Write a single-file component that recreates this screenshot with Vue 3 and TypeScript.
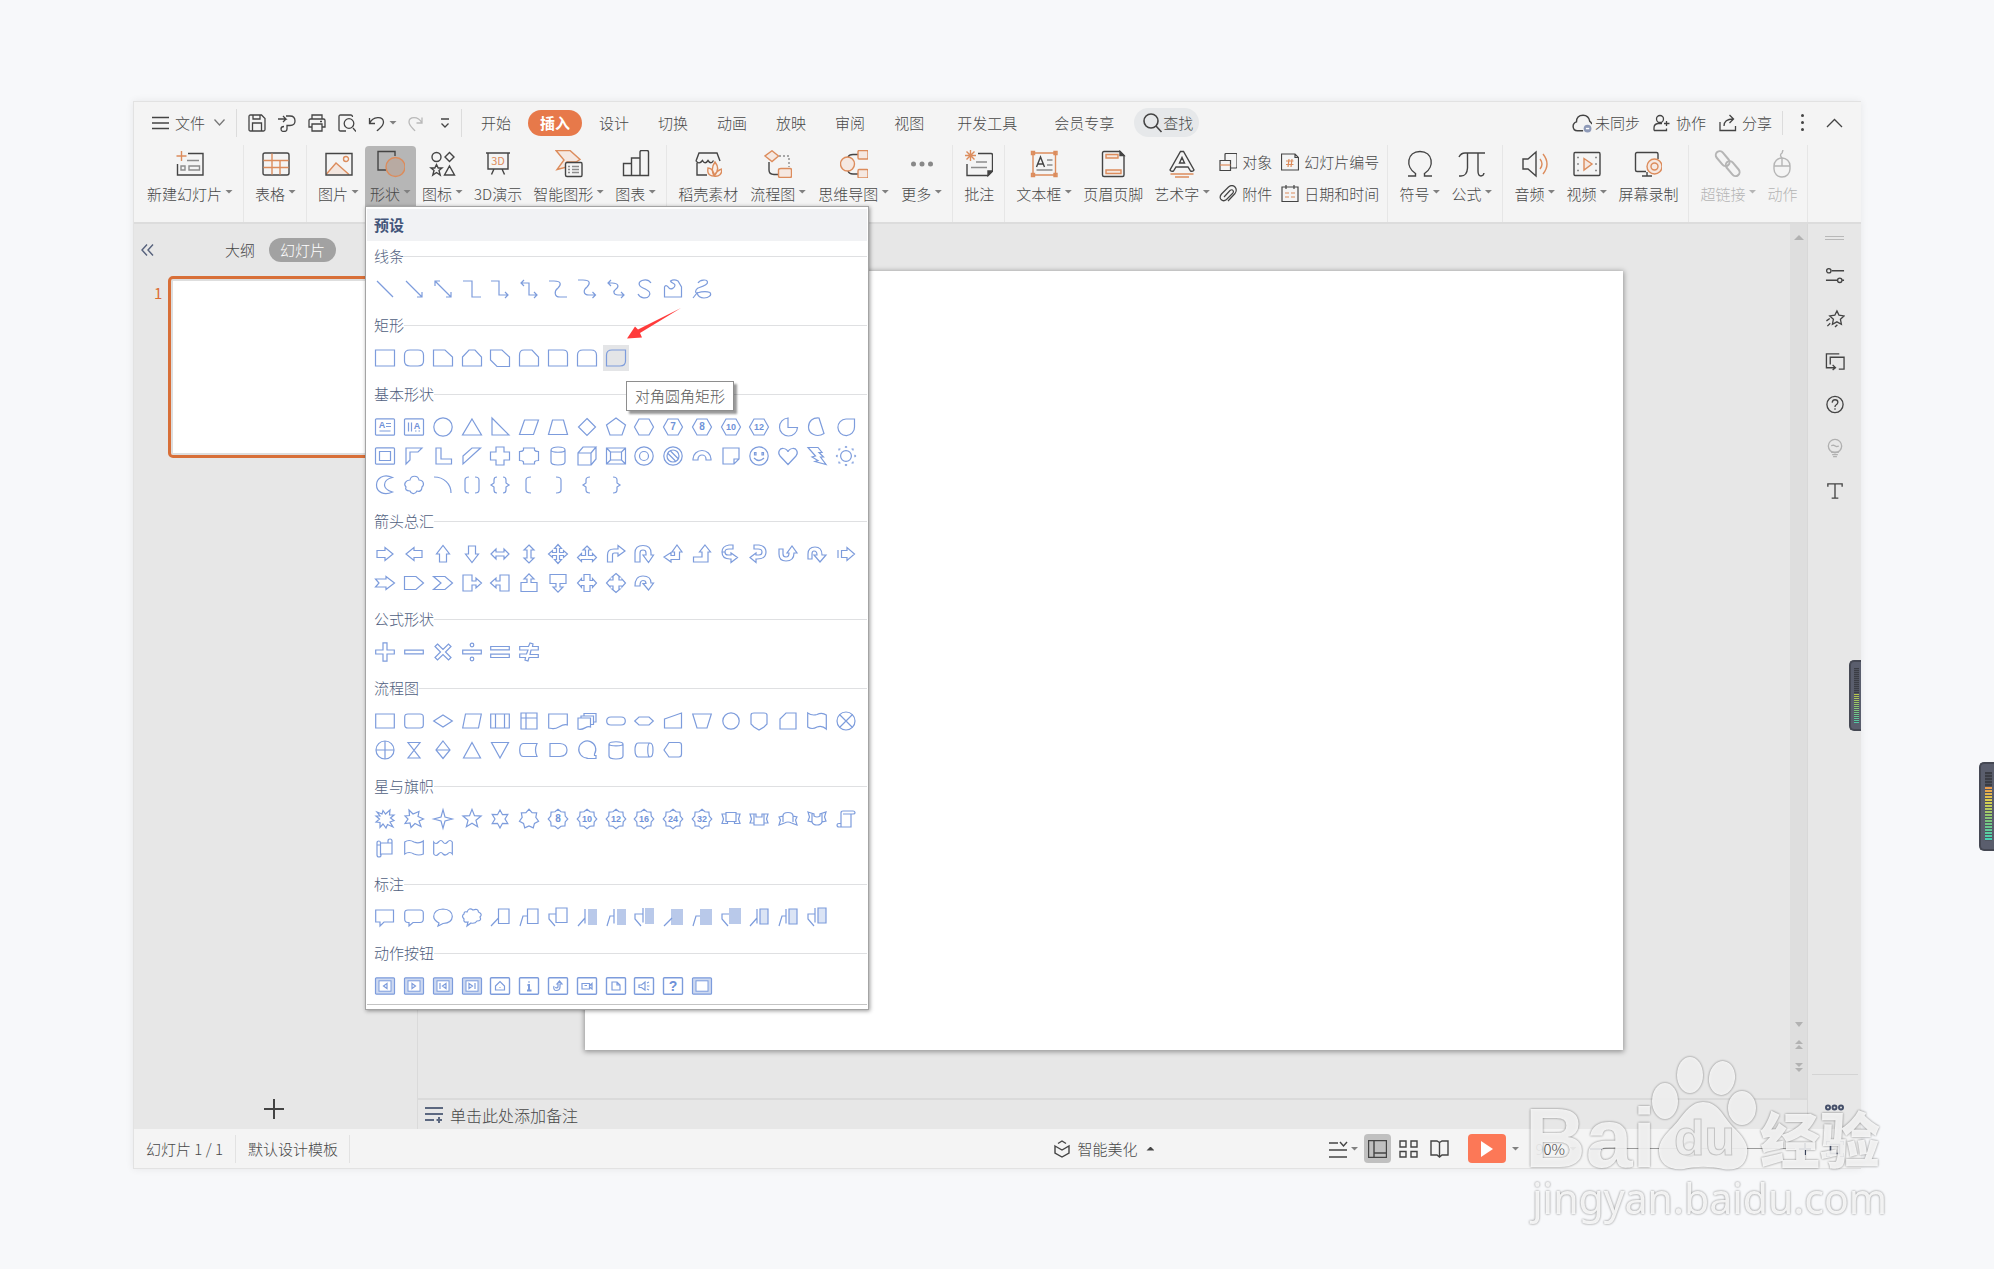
<script setup lang="ts">
import { ref } from 'vue'

interface Tool { label: string; icon: string; caret?: boolean; active?: boolean; disabled?: boolean }
interface ToolGroup { tools: Tool[]; pairs?: { label: string; icon: string }[]; roomy?: boolean }
interface Section { title: string; shapes: string[] }

const p = (d: string, attrs = ''): string => `<path d="${d}" ${attrs}/>`
const o = (d: string, fill = 'none'): string => `<path d="${d}" stroke="#dc8c5c" fill="${fill}"/>`
const g = (d: string): string => `<path d="${d}" stroke="#8c8c8c"/>`
const label = (s: string, x: number, y: number, size: number): string =>
  `<text x="${x}" y="${y}" font-size="${size}" text-anchor="middle" stroke="none" fill="#6f92d8" font-weight="700">${s}</text>`
const circle = (x: number, y: number, r: number): string => `<circle cx="${x}" cy="${y}" r="${r}"/>`
const block = (x: number, y: number, w: number, h: number, fill = '#b9c9ea'): string =>
  `<rect x="${x}" y="${y}" width="${w}" height="${h}" fill="${fill}" stroke="none"/>`

function star(n: number, outer: number, inner: number): string {
  const pts: string[] = []
  for (let i = 0; i < n * 2; i++) {
    const r = i % 2 ? inner : outer
    const a = (Math.PI * i) / n - Math.PI / 2
    pts.push(`${(10 + r * Math.cos(a)).toFixed(2)} ${(10 + r * Math.sin(a)).toFixed(2)}`)
  }
  return p(`M${pts.join('L')}Z`)
}
const hex = 'M5 2H15L19.5 10 15 18H5L.5 10Z'
const hexNum = (s: string): string => p(hex) + label(s, 10, 13.4, s.length > 1 ? 9 : 10)
const badge = (s: string): string => star(8, 9.8, 7.8) + label(s, 10, 13.2, s.length > 1 ? 9 : 10)
const frame = 'M1.5 1.8H18.5Q19.5 1.8 19.5 2.8V17.2Q19.5 18.2 18.5 18.2H1.5Q.5 18.2 .5 17.2V2.8Q.5 1.8 1.5 1.8Z'
const action = (inner: string): string => p(frame, 'stroke-width="1.4"') + inner
const bevelAction = (inner: string): string =>
  p(frame, 'fill="#cdd9f1"') + '<rect x="4" y="4.8" width="12" height="10.4" fill="#fff" stroke-width="1"/>' + inner

const sections: Section[] = [
  {
    title: '线条',
    shapes: [
      p('M2 2L18 18'),
      p('M2 2L18 18M18 13V18H13'),
      p('M2 2L18 18M18 13V18H13M2 7V2H7'),
      p('M1 2H10V18H19'),
      p('M1 2H9V16H18M15 13L18 16 15 19'),
      p('M2 4H10V16H18M5 1L2 4 5 7M15 13L18 16 15 19'),
      p('M1 2H6C14 2 13 6 10 9C6 12 6 18 12 18H19'),
      p('M1 1H6C14 1 13 5 10 8C6 11 6 16 12 16H18.500M15.500 13L18.500 16 15.500 19'),
      p('M2 4H6C13 4 13 8 10 10C7 12 7 16 12 16H18M5 1L2 4 5 7M15 13L18 16 15 19'),
      p('M17 4C15 1 11 .5 8 1.500C4 3 4 7 9 9C16 12 17 14 15 17C13 20 6 19.500 4 15'),
      p('M1.500 18V8C2.500 5.500 4.500 7 6 9C8 11 12 9 12 6C11 4 8 4 7.500 2C10 .5 13 1 15 2L18.500 8V18Z'),
      p('M6 4C8 .5 15 0 15.500 3C16 6 9 8 6 9C3 11 3 14 5 14C10 12.500 14 12 18 13.500C20 16 17 19 12 19C8 19 6 17 5 14L1 19'),
    ],
  },
  {
    title: '矩形',
    shapes: [
      p('M.5 2H19.500V18H.5Z'),
      p('M6 2H14Q19.500 2 19.500 7V13Q19.500 18 14 18H6Q.5 18 .5 13V7Q.5 2 6 2Z'),
      p('M.5 2H12L19.500 9V18H.5Z'),
      p('M.5 9L7 2H13L19.500 9V18H.5Z'),
      p('M.5 2H12L19.500 9V18.500H7L.5 12Z'),
      p('M.5 18V7Q.5 2 5 2H13L19.500 9V18Z'),
      p('M.5 2H15Q19.500 2 19.500 6V18H.5Z'),
      p('M.5 18V7Q.5 2 6 2H14Q19.500 2 19.500 7V18Z'),
      p('M.5 18V7Q.5 2 6 2H19.500V13Q19.500 18 14 18Z'),
    ],
  },
  {
    title: '基本形状',
    shapes: [
      p(frame) + label('A', 7, 11, 9) + p('M11 6.500H16M11 9.500H16M4.500 14H15.500'),
      p(frame) + label('A', 13, 11.5, 9) + p('M4.500 5.500V14.500M7.500 5.500V14.500M11 14H12.500M14.500 14H16'),
      circle(10, 10, 9.2),
      p('M10 2L19.500 18H.5Z'),
      p('M2 1V18H19Z'),
      p('M5.500 3H19.500L14.500 17.500H.5Z'),
      p('M4.500 3H15.500L19.500 17.500H.5Z'),
      p('M10 1.500L18.500 10 10 18.500 1.500 10Z'),
      p('M10 1L19.500 8 16 18H4L.5 8Z'),
      p(hex), hexNum('7'), hexNum('8'), hexNum('10'), hexNum('12'),
      p('M10 1A9 9 0 1 0 19.500 10.500H10Z'),
      p('M12 1L17 16.500C10 21 1.500 17 1.500 10C1.500 4 6 .5 12 1Z'),
      p('M10 2H18.500V10A8.300 8.300 0 1 1 10 2Z'),
      p(frame) + p('M4.500 5.500H15.500V14.500H4.500Z'),
      p('M2 2H18L14 6H6V14L2 18Z'),
      p('M3 2H8V13H18.500V18H3Z'),
      p('M1 10L10 2H18.500L1 18Z'),
      p('M6 1H14V6H19.500V14H14V19H6V14H.5V6H6Z'),
      p('M4.500 2H15.500V4Q16 5.500 19.500 5.500V14.500Q16 14.500 15.500 16V18H4.500V16Q4 14.500 .5 14.500V5.500Q4 5.500 4.500 4Z'),
      p('M3 4C3 0 17 0 17 4V16C17 20 3 20 3 16ZM3 4C3 7 17 7 17 4'),
      p('M1 7H14V19H1ZM1 7L6 1H19L14 7M19 1V13L14 19'),
      p('M.5 2H19.500V18H.5ZM4.500 6H15.500V14H4.500ZM.5 2L4.500 6M19.500 2L15.500 6M.5 18L4.500 14M19.500 18L15.500 14'),
      circle(10, 10, 9.2) + circle(10, 10, 4.5),
      circle(10, 10, 9.2) + circle(10, 10, 6) + p('M5 7.500L12.500 15M7.500 5L15 12.500'),
      p('M1 14V13A9 8.500 0 0 1 19 13V14H14V13A4 4 0 0 0 6 13V14Z'),
      p('M2 2H18V13L13 18H2ZM18 13H13V18'),
      circle(10, 10, 9.2) + p('M5.500 6.500H7V9H5.500ZM13 6.500H14.500V9H13ZM5 12Q10 17 15 12'),
      p('M10 18.500L2 10C-1 6 2 2 5.500 2.500C8 2.500 10 5 10 6C10 5 12 2.500 14.500 2.500C18 2 21 6 18 10Z'),
      p('M1 1.500H11L15 6.500H12L16.500 11H13.500L19 18.500 8 15.500 11 14.500 5 11 8.500 10Z'),
      circle(10, 10, 5.4) + p('M9 1.500L10 .5 11 1.500M9 18.500L10 19.500 11 18.500M1.500 9L.5 10 1.500 11M18.500 9L19.500 10 18.500 11M3 4.500L3 3H4.500M15.500 3H17V4.500M3 15.500V17H4.500M15.500 17H17V15.500'),
      p('M17.500 2.500C8 -2 1.500 4 1.500 10C1.500 17 9 21 17.500 17C11 15 9.500 12 9.500 10C9.500 7 11 4 17.500 2.500Z'),
      p('M6 5C7 0 14 0 15 5C19 5 21 9 18 12C18 16 15 17 13 16C11 20 7 19 6 16C2 16 1 14 2 12C-1 9 2 5 6 5Z'),
      p('M1 2C11 2 18 9 18 18'),
      p('M7 2Q3 2 3 5V15Q3 18 7 18M13 2Q17 2 17 5V15Q17 18 13 18'),
      p('M7 2Q4 2 4 5V8L1 10 4 12V15Q4 18 7 18M13 2Q16 2 16 5V8L19 10 16 12V15Q16 18 13 18'),
      p('M12 2Q7 2 7 5V15Q7 18 12 18'),
      p('M8 2Q13 2 13 5V15Q13 18 8 18'),
      p('M13 2Q9 2 9 5V8L6 10 9 12V15Q9 18 13 18'),
      p('M7 2Q11 2 11 5V8L14 10 11 12V15Q11 18 7 18'),
    ],
  },
  {
    title: '箭头总汇',
    shapes: [
      p('M2 6.500H10V3.500L18 10 10 16.500V13.500H2Z'),
      p('M18 6.500H10V3.500L2 10 10 16.500V13.500H18Z'),
      p('M6.500 18V10H3.500L10 1.500 16.500 10H13.500V18Z'),
      p('M6.500 2V10H3.500L10 18.500 16.500 10H13.500V2Z'),
      p('M1 10L6 5V8H14V5L19 10 14 15V12H6V15Z'),
      p('M10 1L15 6H12V14H15L10 19 5 14H8V6H5Z'),
      p('M10 .5L13.500 4.500H11.500V8.500H15.500V6.500L19.500 10 15.500 13.500V11.500H11.500V15.500H13.500L10 19.500 6.500 15.500H8.500V11.500H4.500V13.500L.5 10 4.500 6.500V8.500H8.500V4.500H6.500Z'),
      p('M10 2L14 6H11.500V11.500H15.500V9.500L19.500 13.500 15.500 17.500V15.500H4.500V17.500L.5 13.500 4.500 9.500V11.500H8.500V6H6Z'),
      p('M1.500 18V11Q1.500 5 8 5H12V1.500L19 7 12 12V9H8.500Q6.500 9 6.500 11V18Z'),
      p('M1 18V9Q1 1.500 9 1.500Q17 1.500 17 9V11H19.500L14.500 18.500 9 11H12V9Q12 6 9 6Q6 6 6 9V18Z'),
      p('M14 1L19 8H16.500V15.500H8V18L1 13 8 8.500V11.500H11.500V8H9Z'),
      p('M13 1L18.500 8H16V18H1.500V13H10V8H7.500Z'),
      p('M12 1H8Q1 2 1 8Q1 15 9 15H10V18.500L16.500 13.500 10 9V11H7Q4 11 4 8Q4 5 8 5H12ZM1 8H4'),
      p('M5 1H10Q17 2 17 8Q17 15 8 15H7V18.500L1 13.500 7 9V11H10Q13 11 13 8Q13 5 9 5H5Z'),
      p('M1 5H5V10Q5 13 8 13Q11 13 11 9H9L14 2 19 9H16Q16 17 8 17Q1 17 1 10Z'),
      p('M1 15V10Q1 3 8 3Q15 3 15 11H19L13 18 7 11H10Q10 7 7 7Q5 7 5 10V15Z'),
      p('M2 6V14M5.500 6.500H11V3.500L18.500 10 11 16.500V13.500H5.500Z'),
      p('M.5 6H11V3.500L19.500 10 11 16.500V14H.5L4 10Z'),
      p('M.5 3.500H12L19.500 10 12 16.500H.5Z'),
      p('M.5 3.500H12L19.500 10 12 16.500H.5L8 10Z'),
      p('M1 2H10V8H14V5L19.500 10 14 15V12H10V18H1Z'),
      p('M19 2H10V8H6V5L.5 10 6 15V12H10V18H19Z'),
      p('M2 18.500V9.500H8V6H5L10 .8 15 6H12V9.500H18V18.500Z'),
      p('M2 1.500V10.500H8V14H5L10 19.200 15 14H12V10.500H18V1.500Z'),
      p('M7 1.500H13V7.500H15.500V5.500L19.500 10 15.500 14.500V12.500H13V18.500H7V12.500H4.500V14.500L.5 10 4.500 5.500V7.500H7Z'),
      p('M10 .5L14 4H13V7H16V6L19.500 10 16 14V13H13V16H14L10 19.500 6 16H7V13H4V14L.5 10 4 6V7H7V4H6Z'),
      p('M1 13Q1 3 9 3Q17 3 17 10H19.500L14.500 17 9 10.500H12Q12 7.500 9 7.500Q6 7.500 6 13Z'),
    ],
  },
  {
    title: '公式形状',
    shapes: [
      p('M8 .8H12V8H19.300V12H12V19.200H8V12H.7V8H8Z'),
      p('M.7 8.200H19.300V11.800H.7Z'),
      p('M4.500 2L10 7.500 15.500 2 18 4.500 12.500 10 18 15.500 15.500 18 10 12.500 4.500 18 2 15.500 7.500 10 2 4.500Z'),
      p('M.7 8.200H19.300V11.800H.7Z') + circle(10, 3, 1.8) + circle(10, 17, 1.8),
      p('M.7 4.500H19.300V7.800H.7ZM.7 12.200H19.300V15.500H.7Z'),
      p('M.7 4.500H9.500L11 1 14 2 13.500 4.500H19.300V8H12L11 12.500H19.300V15.500H10L9 19 6 18 6.500 15.500H.7V12H7.500L9 8H.7Z'),
    ],
  },
  {
    title: '流程图',
    shapes: [
      p('M.7 3H19.300V17H.7Z'),
      p('M4 3H16Q19.300 3 19.300 6V14Q19.300 17 16 17H4Q.7 17 .7 14V6Q.7 3 4 3Z'),
      p('M10 4L19.300 10 10 16 .7 10Z'),
      p('M3.500 3H19.300L16.500 17H.7Z'),
      p('M.7 3H19.300V17H.7ZM5.500 3V17M14.500 3V17'),
      p('M2 2H18V18H2ZM7 2V18M2 7H18'),
      p('M.7 3H19.300V14C13 12 10 19 4 17.500L.7 17Z'),
      p('M4 7V5H7V2.500H19V11H16.500V13.500H13.500M1 7H13.500V16C9 14 7 20 1 18ZM4 5H16.500V13.500'),
      p('M5 6H15Q19.300 6 19.300 10Q19.300 14 15 14H5Q.7 14 .7 10Q.7 6 5 6Z'),
      p('M5 6H15L19.300 10 15 14H5L.7 10Z'),
      p('M1.500 8L18.500 2V17H1.500Z'),
      p('M.7 3H19.300L15 17H5Z'),
      circle(10, 10, 8.2),
      p('M2 4Q2 2 5 2H15Q18 2 18 4V13L15 16 10 19 5 16 2 13Z'),
      p('M8 2H18V18H2V8Z'),
      p('M.7 2Q5 5 10 3.500Q15 1 19.300 4V18Q15 14 10 16Q5 19 .7 16Z'),
      circle(10, 10, 9) + p('M3.500 3.500L16.500 16.500M16.500 3.500L3.500 16.500'),
      circle(10, 10, 9) + p('M10 1V19M1 10H19'),
      p('M4 2.500H16L4 18H16Z'),
      p('M10 1L17 10 10 18.500 3 10ZM3 10H17'),
      p('M10 2.500L18.500 18H1.500Z'),
      p('M1.500 2.500H18.500L10 18Z'),
      p('M4 3.500H18Q15 10 18 16.500H4Q.7 16 .7 10Q.7 4 4 3.500Z'),
      p('M2 3.500H12Q19 4 19 10Q19 16 12 16.500H2Z'),
      p('M10 18A8.500 8.500 0 1 1 17.500 14V15.500H19V18.500H10Z'),
      p('M3 4C3 1 17 1 17 4V16C17 20 3 20 3 16ZM3 4C3 6.500 17 6.500 17 4'),
      p('M4 3H16C20 3 20 17 16 17H4C0 17 0 3 4 3ZM16 3C13 3 13 17 16 17'),
      p('M6 2.500H16Q18.500 2.500 18.500 5V14Q18.500 17 16 17H6L1 10Z'),
    ],
  },
  {
    title: '星与旗帜',
    shapes: [
      p('M2 3L7 5 8 1.500 10.500 5 15 1 14.500 6 19 6 15.500 9 19 11.500 15 13 18 18 12.500 15.500 11 19 8 15 5 18.500 5 13.500 1 13 4.500 10 1 7 5 7Z'),
      p('M5 1L9 5 15 2.500 14 7.500 19.500 10 15 12 17 17.500 11 14.500 7 18.500 6 14 1 14.500 4 10 1 7 5.500 6.500Z'),
      star(4, 9.3, 2.8), star(5, 9.6, 4.2), star(6, 9, 5), star(7, 9.8, 7),
      badge('8'), badge('10'), badge('12'), badge('16'), badge('24'), badge('32'),
      p('M1 5H5V3.500H15V5H19L17.500 10 19 14.500H13.500V12.500H6.500V14.500H1L2.500 10ZM5 5V12.500H6.500M15 5V12.500H13.500'),
      p('M1 5H7V8H13V5H19L17.500 10 19 14H15V16H5V14H1L2.500 10ZM5 5V14M15 5V14'),
      p('M1 8L5 7Q5 3.500 10 3.500Q15 3.500 15 7L19 8 17.500 11 19 16 13.500 14Q10 12 6.500 14L1 16 2.500 11ZM5 7V13M15 7V13'),
      p('M1 3L7 5V7Q10 9 13 7V5L19 3 17.500 8 19 12 15 13Q14 16 10 16Q6 16 5 13L1 12 2.500 8ZM5 5V13M15 5V13'),
      p('M7 2H17Q19 2 19 4 19 5 17 5H15V18H3Q1 18 1 16 1 14.500 3 14.500H5V4Q5 2 7 2ZM5 14.500V18M7 5H17'),
      p('M2 5Q2 3 4 3 5.500 3 5.500 5H13V3Q13 1 15 1 17 1 17 3V16H6V17Q6 19 4 19 2 19 2 17ZM2 7H5.500M13 5H17M5.500 5V17'),
      p('M.7 4Q5 1 10 4Q15 6 19.300 3V16Q15 18 10 16Q5 13 .7 16Z'),
      p('M.7 4Q3 7 5.500 4Q8 1 10 4Q12 7 14.500 4Q17 1 19.300 4V16Q17 13 14.500 16Q12 18 10 16Q8 13 5.500 16Q3 19 .7 16Z'),
    ],
  },
  {
    title: '标注',
    shapes: [
      p('M.7 3H18.500V15H9L5 19V15H.7Z'),
      p('M4 3H16Q19.300 3 19.300 6V12Q19.300 15.500 16 15.500H9L5 19V15.500H4Q.7 15.500 .7 12V6Q.7 3 4 3Z'),
      p('M6 16Q.7 13 .7 9.500Q1 2.500 10 2Q19 2.500 19.300 9.500Q19 16 10 16.500L5 19Z'),
      p('M5 5Q7 0 11 3Q16 1 16.500 5Q21 7 18 10Q20 14 15 14Q13 17 9 16L5 19 6 15Q1 16 2 12Q-1 9 2 7Q2 4 5 5Z'),
      p('M8.500 2H19V16.500H8.500ZM1 19L8.500 11'),
      p('M8.500 2H19V16.500H8.500ZM1 19L4 9H8.500'),
      p('M8 1H19V15.500H8ZM8 7H1V12L7 19'),
      p('M8 2V16.500M1 19L8 11') + block(11, 2, 9, 16),
      p('M8 2V16.500M1 19L4 9H8') + block(11, 2, 9, 16),
      p('M9 1V15.500M9 7H1V12L7 19') + block(11, 1, 9, 16),
      block(8, 2, 12, 16) + p('M1 19L9 11'),
      block(8, 2, 12, 16) + p('M1 19L4 9H8'),
      block(8, 1, 12, 16) + p('M8 7H1V12L7 19'),
      p('M8 2V16.500M1 19L8 11') + block(11, 2, 8, 15, '#dbe4f5') + p('M11 2H19V17H11Z'),
      p('M8 2V16.500M1 19L4 9H8') + block(11, 2, 8, 15, '#dbe4f5') + p('M11 2H19V17H11Z'),
      p('M8 1V15.500M8 7H1V12L7 19') + block(11, 1, 8, 15, '#dbe4f5') + p('M11 1H19V16H11Z'),
    ],
  },
  {
    title: '动作按钮',
    shapes: [
      bevelAction(p('M12 7.500L8.500 10 12 12.500Z')),
      bevelAction(p('M8 7.500L11.500 10 8 12.500Z')),
      bevelAction(p('M13 7.500L9.500 10 13 12.500ZM7 7V13')),
      bevelAction(p('M7 7.500L10.500 10 7 12.500ZM13 7V13')),
      action(p('M5.500 10L10 5.500 14.500 10V14H5.500ZM9.500 11.500H10.500')),
      action(p('M8.500 9H10V14M8 14.500H12.500M10 5.500V6.500', 'stroke-width="2"')),
      action(p('M6 10Q5 14 8 14.500Q12 14.500 12 11V8H14L11.500 5 9 8H10V11Q8 13 7.500 11')),
      action(p('M5 7.500H12.500V13H5ZM12.500 10L15 7.500V13L12.500 11M7.500 9.500H10')),
      action(p('M6 6H11L14 9V14H6ZM11 6V9H14')),
      action(p('M5 9H7.500L11 6V14L7.500 11.500H5ZM13 7L15 6M13 10H15.500M13 13L15 14')),
      action(label('?', 10, 15, 14)),
      bevelAction(''),
    ],
  },
]

const icon: Record<string, string> = {
  newSlide: o('M5.500 1V11M.5 6H10.500') + p('M12 3.500H27V25H1.500V14') + g('M11 10.500H23M5 16H9V20H5ZM13 16H23.500V20H13Z'),
  table: p('M3 3H25Q27 3 27 5V23Q27 25 25 25H3Q1 25 1 23V5Q1 3 3 3Z') + o('M1.500 10.500H26.500M1.500 17.500H26.500M10 3.500V24.500M18 10.500V24.500'),
  picture: o('M1.500 24L11 13 24 24.500', '#f3e6df') + p('M1 3.500H27V25H1Z') + o('M21 6.500a2.500 2.500 0 1 1 0 5 2.500 2.500 0 0 1 0-5Z'),
  shapes: p('M9 20H1V1.500H18V6') + o('M18.500 7.500a9.500 9.500 0 1 1 0 19 9.500 9.500 0 0 1 0-19Z', '#b8aaa2'),
  glyphs: p('M7.500 2.500a4.500 4.500 0 1 1 0 9 4.500 4.500 0 0 1 0-9ZM20.500 2.500L25 7 20.500 11.500 16 7ZM20.500 16L25.500 25H15.500Z') + p('M7.500 14.500L9.200 18H13L10 20.500 11.200 25 7.500 22.500 3.800 25 5 20.500 2 18H5.800Z'),
  stage: p('M2 3H26M4 3V19H24V3M10 19L7.500 24.500M18 19L20.500 24.500') + '<text x="14" y="15" text-anchor="middle" font-size="11" font-weight="400" stroke="none" fill="#dc8c5c">3D</text>',
  smart: o('M1 .5H15L25 9.500 21 12H12V17L2 19.500 9 10Z', '#f5e8e1') + p('M12 12.500H26Q27 12.500 27 14V25Q27 26.500 26 26.500H12Q10.500 26.500 10.500 25V14Q10.500 12.500 12 12.500Z', 'fill="#f4f4f4"') + g('M13 16.500H15M17 16.500H24M13 19.500H15M17 19.500H24M13 22.500H15M17 22.500H24'),
  chart: p('M1.500 13.500H9.500V25.500H1.500ZM9.500 8H18V25.500H9.500ZM18 2Q18 .5 19.500 .5H25Q26.500 .5 26.500 2V25.500H18Z'),
  store: p('M2 11L5 3H23L26 11M2 11Q5 15 8.500 10.500Q11 15 14 10.500Q17 15 19.500 10.500M3 13V25H13') + o('M20 26C12 26 14 19 14 18C18 18 20 22 20 26C17 20 18 16 21 12C25 17 24 22 20 26C22 22 24 20 28 19C28 24 25 27 20 26Z', '#f9efe9'),
  flow: p('M5 12V20Q5 24.500 10 24.500H14') + '<path d="M15 6H25V17" stroke="#8c8c8c" stroke-dasharray="2 2"/>' + o('M8 .8L14.500 6 8 11.500 1 6Z', '#f5e8e1') + o('M17 18.500H26Q27.500 18.500 27.500 20V26Q27.500 27.500 26 27.500H16Q14.500 27.500 14.500 26V20Q14.500 18.500 17 18.500Z', '#f5e8e1'),
  mind: p('M8 7Q9 4.500 13 4.500H18M8 21Q9 24 13 24H18') + o('M7.500 7a7 7 0 1 1 0 14 7 7 0 0 1 0-14Z', '#f5e8e1') + o('M19 .5H27Q28 .5 28 2V7.500Q28 9 27 9H19Q18 9 18 7.500V2Q18 .5 19 .5ZM19 19.500H27Q28 19.500 28 21V26.500Q28 28 27 28H19Q18 28 18 26.500V21Q18 19.500 19 19.500Z', '#f5e8e1'),
  more: '<g fill="#888" stroke="none"><circle cx="5.500" cy="14" r="2.500"/><circle cx="14" cy="14" r="2.500"/><circle cx="22.500" cy="14" r="2.500"/></g>',
  comment: o('M5.500 0V11M0 5.500H11M1.500 1.500L9.500 9.500M9.500 1.500L1.500 9.500') + p('M13 3.500H26Q27.500 3.500 27.500 5V21L23 25.500H2V14') + p('M27.500 21H23V25.500Z', 'fill="#444"') + g('M11 12H22M6 17.500H22'),
  textBox: o('M3 3H25.500V25H3ZM1.500 1.500H4.500V4.500H1.500ZM24 1.500H27V4.500H24ZM1.500 23.500H4.500V26.500H1.500ZM24 23.500H27V26.500H24Z') + p('M6.500 17L10.500 7 14.500 17M8 14H13') + g('M17 10H22.500M17 15H22.500M6.500 20H22.500'),
  header: p('M5 1.500H21L25 5.500V25Q25 26.500 23.500 26.500H5Q3.500 26.500 3.500 25V3Q3.500 1.500 5 1.500Z') + p('M21 1.500V5.500H25Z', 'fill="#444"') + o('M7 4.500H19V8H7ZM7 20H22V23.500H7Z', '#f5e8e1'),
  art: p('M12.500 1.500H15.500L26 20Q25 22 22.500 21L20 17H8L5.500 21Q3 22 2 20ZM11.500 13H16.500L14 7.500Z') + o('M2.500 24H25.500M7 27H21'),
  omega: p('M2 26H9.500V23.500C-1 17 1 1.500 14 1.500C27 1.500 29 17 18.500 23.500V26H26'),
  pi: p('M1 7Q3 3 7 3H27M9.500 3V18Q9 26 3 26H1M20 3V21Q20 26 23 26Q25.500 26 26 23'),
  sound: p('M2 9H7L15 2V26L7 19H2Z') + o('M19 9Q23 14 19 19M22 4Q30 14 22 24'),
  video: p('M2 2.500H26Q27 2.500 27 4V24Q27 25.500 26 25.500H2Q1 25.500 1 24V4Q1 2.500 2 2.500Z') + o('M11 8.500L19 14 11 20Z', '#f5e8e1') + g('M4 7.500H6M4 14H6M4 20.500H6M22 7.500H24M22 14H24M22 20.500H24'),
  record: p('M24 9V4Q24 2.500 22.500 2.500H3Q1.500 2.500 1.500 4V20Q1.500 21.500 3 21.500H12M13 22V26M8 26H18') + o('M20.500 9a7.500 7.500 0 1 1 0 15 7.500 7.500 0 0 1 0-15ZM20.500 13a3.500 3.500 0 1 1 0 7 3.500 3.500 0 0 1 0-7Z', '#f5e8e1'),
  link: '<g stroke="#b5b5b5" stroke-width="2"><rect x="0" y="5" width="17" height="8" rx="4" transform="rotate(50 9 9)"/><rect x="10" y="15" width="17" height="8" rx="4" transform="rotate(50 19 19)"/></g>',
  mouse: '<g stroke="#b5b5b5"><rect x="6" y="8" width="16" height="19" rx="8"/><path d="M6 16H22M14 8V16M14 8Q11 5 14 3L15 0"/></g>',
}
const small: Record<string, string> = {
  object: p('M6 7V1.500Q6 .5 7 .5H17Q18 .5 18 1.500V14Q18 15 17 15H12') + p('M1 7.500H11.500V17.500H1Z') + o('M1 12H11.500'),
  number: p('M2 1H14L17.500 4.500V17H.5V1ZM14 1V4.500H17.500') + o('M5 8H12.500M5 11.500H12.500M8 6L7 14M11 6L10 14'),
  clip: p('M5 12L11 5.500Q13 4 14 5.500Q15 7 13.500 8.500L7.500 14.500Q4.500 17 2 14.500Q0 12 2.500 9L9.500 2Q13-1 16 2Q18.500 5 16 8.500L9 16'),
  date: p('M1 2H17V16.500H1ZM5 0V4M13 0V4') + o('M4 8H8M10 8H14M4 12H8M10 12H14'),
  save: p('M2.500 1H13.500L17 4.500V15.500Q17 17 15.500 17H2.500Q1 17 1 15.500V2.500Q1 1 2.500 1ZM5 1V5H12V1M4.500 17V9H13.500V17'),
  output: p('M0 5H8L5 2M8 5L5 8M8 2H12Q17 2 17 7Q17 11.500 12 11.500H9V15Q9 17.500 6 17.500Q3 17.500 3 15Q3 12.500 6 12.500'),
  print: p('M4 5V1H14V5M3.500 13H1V6.500Q1 5 2.500 5H15.500Q17 5 17 6.500V13H14.500M4 10H14V17H4ZM12 7.500H14'),
  preview: p('M8 17H2.500Q1 17 1 15.500V2.500Q1 1 2.500 1H13Q14.500 1 14.500 3M15 14L18 17.500') + circle(11, 9.5, 4.8),
  undo: p('M1.500 4V9.500H7M1.500 9.500C5 2 15 2 15.500 8C15.500 13 10 15 9 17'),
  redo: '<g stroke="#b9b9b9"><path d="M16 3.500V9H10.500M16 9C12 1.500 3 2.500 3 8C3 12 8 15 9 17"/></g>',
  custom: p('M5 5H13M5.500 9.500L9 13 12.500 9.500'),
  cloud: p('M10 16H5Q1 16 1 12Q1 9 4 8Q4 2 10 2Q15 2 16 7.500Q18 9 17.500 10') + '<circle cx="14" cy="14" r="3.500" fill="#8e9ab8" stroke="none"/><path d="M12.500 14H15.500" stroke="#fff"/>',
  person: p('M1 16.500V14Q1 10 5 9.500H9M1 16.500H13.500V14.500M13.500 7V12M11 9.500H16.500') + circle(7, 5, 3.5),
  share: p('M1 8V16.500H16.500V12M5 12Q5 5 14 5M10.500 1L14.500 5 10.500 9'),
  layout: p('M.5 .5H18.500V17.500H.5ZM6 .5V17.500M6 13H18.500'),
  sorter: p('M1 1H7V7H1ZM12 1H18V7H12ZM1 11.500H7V17H1ZM12 11.500H18V17H12Z'),
  book: p('M1 1H7L9.500 2.500 12 1H18V15H12L9.500 17 7 15H1ZM9.500 2.500V17'),
  notes: p('M0 3H9M0 10H18M0 17H18M11 2L14.500 6 18 2'),
  cube: p('M2 6L9 10 16 6V13L9 17 2 13ZM5 3.500L9 1 13 3.500'),
  memo: '<g stroke="#5c6880" stroke-width="2"><path d="M0 3H18M0 9H18M0 15H9M14 12V18M11.500 15H17"/></g>',
}

const quick = ['save', 'output', 'print', 'preview', 'undo', 'redo', 'custom']
const tabs = ['开始', '插入', '设计', '切换', '动画', '放映', '审阅', '视图', '开发工具', '会员专享']
const activeTab = ref('插入')
const zoomLevel = ref(45)
const openMenu = ref(true)

const groups: ToolGroup[] = [
  { tools: [{ label: '新建幻灯片', icon: 'newSlide', caret: true }] },
  { tools: [{ label: '表格', icon: 'table', caret: true }] },
  {
    tools: [
      { label: '图片', icon: 'picture', caret: true },
      { label: '形状', icon: 'shapes', caret: true, active: true },
      { label: '图标', icon: 'glyphs', caret: true },
      { label: '3D演示', icon: 'stage' },
      { label: '智能图形', icon: 'smart', caret: true },
      { label: '图表', icon: 'chart', caret: true },
    ],
  },
  {
    roomy: true,
    tools: [
      { label: '稻壳素材', icon: 'store' },
      { label: '流程图', icon: 'flow', caret: true },
      { label: '思维导图', icon: 'mind', caret: true },
      { label: '更多', icon: 'more', caret: true },
    ],
  },
  { tools: [{ label: '批注', icon: 'comment' }] },
  {
    tools: [
      { label: '文本框', icon: 'textBox', caret: true },
      { label: '页眉页脚', icon: 'header' },
      { label: '艺术字', icon: 'art', caret: true },
    ],
    pairs: [
      { label: '对象', icon: 'object' },
      { label: '幻灯片编号', icon: 'number' },
      { label: '附件', icon: 'clip' },
      { label: '日期和时间', icon: 'date' },
    ],
  },
  { tools: [{ label: '符号', icon: 'omega', caret: true }, { label: '公式', icon: 'pi', caret: true }] },
  {
    tools: [
      { label: '音频', icon: 'sound', caret: true },
      { label: '视频', icon: 'video', caret: true },
      { label: '屏幕录制', icon: 'record' },
    ],
  },
  {
    tools: [
      { label: '超链接', icon: 'link', caret: true, disabled: true },
      { label: '动作', icon: 'mouse', disabled: true },
    ],
  },
]

const side = [
  { name: '属性', art: p('M6 4H19M0 14H12M17 14H19') + circle(3, 4, 2.3) + circle(14.5, 14, 2.3) },
  { name: '动画', art: p('M11.500 1L13.700 5.500 19 6.300 15.200 9.800 16.200 15 11.500 12.500 6.800 15 7.800 9.800 4 6.300 9.300 5.500ZM4 9L.5 11.500M4.500 14L1.500 17M12 15.500L9.500 18') },
  { name: '切换', art: p('M14 1H.5V15.500H9M7 12.500L10 15.500 7 18M4.500 12V4.500H19V17H13.500') },
  { name: '帮助', art: circle(9.5, 9, 8.5) + p('M6.500 7Q7 4 9.500 4Q12.500 4 12.500 6.500Q12.500 8 10.500 9.500Q9.500 10 9.500 11.500M9.500 13V14.500') },
  { name: '提示', art: '<g stroke="#b0b0b0"><circle cx="9.500" cy="7.500" r="7"/><path d="M5.500 7L8 6.500 11 8 13.500 7.500M5.500 14H13.500M6.500 16.500H12.500M7.500 18.500H11.500"/></g>' },
  { name: '字体', art: p('M2 5V2H17V5M9.500 2V17M6 17H13') },
]
</script>

<template>
  <div class="page">
    <main class="window">
      <header class="menu-row">
        <button class="file"><svg viewBox="0 0 17 14"><path d="M0 1.500H17M0 7H17M0 12.500H17" /></svg>文件<svg class="chev" viewBox="0 0 11 7"><path d="M.5 .5L5.500 6 10.500 .5" /></svg></button>
        <div class="quick">
          <template v-for="q in quick" :key="q">
            <button :aria-label="q"><svg viewBox="0 0 18 18" v-html="small[q]"></svg></button>
            <i v-if="q === 'undo'" class="caret"></i>
          </template>
        </div>
        <nav class="tabs">
          <button v-for="t in tabs" :key="t" :class="{ active: t === activeTab, long: t.length > 2 }" @click="activeTab = t">{{ t }}</button>
        </nav>
        <button class="search"><svg viewBox="0 0 20 20"><circle cx="8" cy="8" r="7" /><path d="M13 13L18.500 19" /></svg>查找</button>
        <div class="account">
          <button><svg class="wide" viewBox="0 0 18 18" v-html="small.cloud"></svg>未同步</button>
          <button><svg viewBox="0 0 18 18" v-html="small.person"></svg>协作</button>
          <button><svg viewBox="0 0 18 18" v-html="small.share"></svg>分享</button>
          <span class="bar"></span>
          <button class="dots" aria-label="更多选项"><i></i><i></i><i></i></button>
          <button aria-label="收起功能区"><svg class="fold" viewBox="0 0 17 10"><path d="M1 9L8.500 1.500 16 9" /></svg></button>
        </div>
      </header>

      <div class="ribbon">
        <div v-for="(grp, i) in groups" :key="i" class="group" :class="{ roomy: grp.roomy }">
          <div v-for="t in grp.tools" :key="t.label" class="slot">
            <button class="tool" :class="{ active: t.active }" :disabled="t.disabled" @click="t.active && (openMenu = !openMenu)">
              <svg viewBox="0 0 28 28" v-html="icon[t.icon]"></svg>
              <span>{{ t.label }}<i v-if="t.caret" class="caret"></i></span>
            </button>

            <section v-if="t.active && openMenu" class="gallery">
              <h2>预设</h2>
              <div class="sections">
                <div v-for="s in sections" :key="s.title" class="section">
                  <h3>{{ s.title }}</h3>
                  <div class="grid">
                    <button v-for="(shape, n) in s.shapes" :key="n" :aria-label="s.title + (n + 1)" :class="{ hover: s.title === '矩形' && n === 8 }">
                      <svg viewBox="0 0 20 20" v-html="shape"></svg>
                    </button>
                  </div>
                </div>
              </div>
              <div class="tip" role="tooltip">对角圆角矩形</div>
              <svg class="pointer" viewBox="0 0 54 32"><path d="M0 30.500L8 18.500 11 21.500 54 0 13 25 15 29.500Z" /></svg>
            </section>
          </div>
          <div v-if="grp.pairs" class="pairs">
            <button v-for="x in grp.pairs" :key="x.label"><svg viewBox="0 0 18 18" v-html="small[x.icon]"></svg>{{ x.label }}</button>
          </div>
        </div>
      </div>

      <div class="work">
        <aside class="slides">
          <div class="slides-head">
            <button class="collapse" aria-label="收起"><svg viewBox="0 0 13 12"><path d="M6 .5L1 6 6 11.500M12 .5L7 6 12 11.500" /></svg></button>
            <button class="outline">大纲</button>
            <button class="pill">幻灯片</button>
          </div>
          <div class="thumb-row"><span>1</span><div class="thumb"></div></div>
          <button class="add" aria-label="新建"><svg viewBox="0 0 20 20"><path d="M10 0V20M0 10H20" /></svg></button>
        </aside>
        <div class="center">
          <div class="stage">
            <div class="canvas"><div class="slide"></div></div>
            <div class="scroll">
              <svg viewBox="0 0 10 5"><path d="M0 5L5 0 10 5Z" /></svg>
              <div class="scroll-end">
                <svg viewBox="0 0 8 5"><path d="M0 0L4 5 8 0Z" /></svg>
                <svg viewBox="0 0 8 10"><path d="M0 4L4 0 8 4ZM0 9L4 5 8 9Z" /></svg>
                <svg viewBox="0 0 8 10"><path d="M0 0L4 4 8 0ZM0 5L4 9 8 5Z" /></svg>
              </div>
            </div>
          </div>
          <div class="notes"><svg viewBox="0 0 19 19" v-html="small.memo"></svg>单击此处添加备注</div>
        </div>
        <aside class="side">
          <span class="grip"></span>
          <button v-for="s in side" :key="s.name" :aria-label="s.name"><svg viewBox="-1 -1 21 21" v-html="s.art"></svg></button>
          <div class="side-end"><svg viewBox="0 0 19 7"><circle cx="3" cy="3.500" r="2" /><circle cx="9.500" cy="3.500" r="2" /><circle cx="16" cy="3.500" r="2" /></svg></div>
        </aside>
      </div>

      <footer class="status">
        <span class="cell">幻灯片 1 / 1</span>
        <span class="cell">默认设计模板</span>
        <button class="beautify"><svg viewBox="0 0 18 18" v-html="small.cube"></svg>智能美化<i class="caret up"></i></button>
        <div class="views">
          <button class="note-toggle" aria-label="备注"><svg viewBox="0 0 19 18" v-html="small.notes"></svg><i class="caret"></i></button>
          <button class="view active" aria-label="普通视图"><svg viewBox="0 0 19 18" v-html="small.layout"></svg></button>
          <button class="view" aria-label="幻灯片浏览"><svg viewBox="0 0 19 18" v-html="small.sorter"></svg></button>
          <button class="view" aria-label="阅读视图"><svg viewBox="0 0 19 18" v-html="small.book"></svg></button>
          <button class="play" aria-label="放映"><svg viewBox="0 0 12 16"><path d="M0 0L12 8 0 16Z" /></svg></button>
          <i class="caret"></i>
          <span class="percent">90%</span><i class="caret"></i>
          <button class="step" aria-label="缩小"><svg viewBox="0 0 12 12"><path d="M0 6H12" /></svg></button>
          <input v-model="zoomLevel" type="range" min="0" max="100" aria-label="缩放">
          <button class="step" aria-label="放大"><svg viewBox="0 0 12 12"><path d="M0 6H12M6 0V12" /></svg></button>
          <button class="fit" aria-label="适应窗口"><svg viewBox="0 0 18 16"><path d="M0 4V0H4M14 0H18V4M18 12V16H14M4 16H0V12M4.500 3.500H13.500V12.500H4.500Z" /></svg></button>
        </div>
      </footer>
      <div class="meter inner"><i></i></div>
    </main>
    <div class="meter outer"><i></i></div>

    <svg class="mark" viewBox="0 0 364 180">
      <g class="brand">
        <text x="-3" y="113" class="latin">Bai</text>
        <ellipse cx="137" cy="47" rx="13" ry="18" />
        <ellipse cx="162" cy="21" rx="13" ry="18" />
        <ellipse cx="194" cy="24" rx="13" ry="17" transform="rotate(8 194 24)" />
        <ellipse cx="214" cy="54" rx="14" ry="17" />
        <path d="M175 48C190 48 194 61 205 73C214 82 221 90 219 100C217 114 206 117 195 115C182 112 168 112 156 115C142 117 131 110 131 97C131 84 143 76 150 67C158 57 164 48 175 48Z" />
        <text x="146" y="101" class="du">du</text>
        <text x="232" y="109" class="han">经验</text>
        <text x="4" y="160" class="url">jingyan.baidu.com</text>
      </g>
    </svg>
  </div>
</template>

<style>
body { margin: 0; background: #f7f8fa; }
</style>

<style scoped>
* { box-sizing: border-box; }
.page {
  position: relative; display: flex; flex-direction: column; min-height: 100vh; padding: 101px 133px 100px; overflow: hidden;
  background: #f7f8fa; color: #484848;
  font: 300 15px/20px "Noto Sans CJK SC", "Noto Sans", sans-serif;
}
button { padding: 0; border: 0; background: none; color: inherit; font: inherit; white-space: nowrap; }
svg { display: block; flex: none; fill: none; stroke: #444; stroke-width: 1.4; }
.caret { display: inline-block; flex: none; width: 8px; height: 4px; background: #808080; clip-path: polygon(0 0, 100% 0, 50% 100%); }
.caret.up { background: #444; clip-path: polygon(0 100%, 100% 100%, 50% 0); }

.window {
  position: relative; flex: 1; display: flex; flex-direction: column; background: #e7e7e7;
  border: 1px solid #e2e2e2; border-right: 0; box-shadow: 0 0 8px rgba(0, 0, 0, .07);
}

.menu-row { display: flex; align-items: center; height: 43px; padding: 0 18px 2px; background: #f4f4f4; }
.menu-row svg { stroke-width: 1.3; }
.file { display: flex; align-items: center; gap: 6px; padding-right: 11px; border-right: 1px solid #dcdcdc; height: 28px; }
.file svg { width: 17px; height: 14px; }
.file .chev { width: 11px; height: 7px; margin-left: 3px; stroke: #777; }
.quick { display: flex; align-items: center; gap: 12px; height: 28px; padding: 0 7px 0 11px; border-right: 1px solid #dcdcdc; }
.quick svg { width: 18px; height: 18px; }
.quick .caret { margin: 0 -3px 0 -9px; }
.tabs { display: flex; gap: 5px; padding: 0 4px 0 7px; }
.tabs button { height: 26px; padding: 0 12px; border-radius: 13px; }
.tabs .long { padding: 0 16px; }
.tabs .active { background: #e7794a; color: #fff; font-weight: 700; }
.search { display: flex; align-items: center; height: 29px; padding: 0 6px 0 9px; border-radius: 15px; background: #e6e8ea; }
.search svg { width: 20px; height: 20px; stroke-width: 1.6; }
.account { display: flex; align-items: center; margin-left: auto; gap: 13px; }
.account button { display: flex; align-items: center; gap: 5px; }
.account svg { width: 18px; height: 18px; }
.account .wide { width: 20px; height: 20px; margin-right: -2px; }
.account .fold { width: 17px; height: 10px; }
.account .bar { width: 1px; height: 24px; margin: 0 5px 0 -3px; background: #dcdcdc; }
.account .dots { flex-direction: column; gap: 4px; margin-right: 9px; }
.dots i { width: 3px; height: 3px; border-radius: 2px; background: #444; }

.ribbon { position: relative; z-index: 2; display: flex; height: 79px; padding-left: 2px; background: #f4f4f4; border-bottom: 2px solid #dcdcdc; }
.group { display: flex; align-items: flex-start; gap: 1px; height: 77px; padding: 1px 5px 0 6px; border-right: 1px solid #e6e6e6; }
.group.roomy { gap: 2px; }
.slot { position: relative; }
.tool { display: flex; flex-direction: column; align-items: center; gap: 6px; height: 60px; padding: 4px 5px 2px; border-radius: 4px 4px 0 0; }
.tool svg { width: 28px; height: 28px; }
.tool span { display: flex; align-items: center; gap: 3px; }
.tool .caret { margin-bottom: 5px; }
.tool.active { background: #b6b6b6; }
.tool:disabled { color: #b5b5b5; }
.tool:disabled .caret { background: #b5b5b5; }
.pairs { display: grid; grid-template-columns: auto auto; grid-auto-rows: 20px; gap: 12px 9px; padding: 6px 3px 0 3px; }
.pairs button { display: flex; align-items: center; gap: 5px; }
.pairs svg { width: 18px; height: 18px; stroke-width: 1.2; }

.gallery {
  position: absolute; top: 100%; left: 0; width: 504px; padding: 2px 1px 4px; background: #fff;
  border: 1px solid #a4a4a4; box-shadow: 1px 1px 4px rgba(0, 0, 0, .4); color: #50607e;
}
.gallery h2 { margin: 0 0 5px; padding: 6px 7px; background: #f1f2f4; color: #43557a; font-size: 15px; line-height: 20px; font-weight: 700; }
.section + .section { margin-top: 12px; }
.section h3 { display: flex; align-items: center; margin: 0 0 8px; padding-left: 7px; font-size: 15px; line-height: 20px; font-weight: 300; }
.section h3::after { content: ""; flex: 1; height: 1px; background: #dfe0e2; }
.grid { display: grid; grid-template-columns: repeat(17, 1fr); grid-auto-rows: 29px; padding: 0 7px 0 4px; }
.grid button { display: flex; align-items: center; justify-content: center; }
.grid svg { width: 20px; height: 20px; stroke: #7d9cdc; stroke-width: 1.2; overflow: visible; font-family: "Liberation Sans", sans-serif; }
.grid .hover { width: 26px; height: 26px; place-self: center; background: #e4e5e7; }
.gallery::after { content: ""; display: block; height: 1px; margin-top: 4px; background: #c4c4c4; }
.tip {
  position: absolute; left: 260px; top: 174px; padding: 4px 8px; background: #fff; border: 1px solid #8e8e8e;
  box-shadow: 3px 3px 2px rgba(0, 0, 0, .4); color: #5a5a5a;
}
.pointer { position: absolute; left: 261px; top: 101px; width: 54px; height: 32px; fill: #ff3b3b; stroke: none; }

.work { flex: 1; display: flex; min-height: 0; }
.slides { display: flex; flex-direction: column; width: 284px; border-right: 1px solid #dadada; }
.slides-head { display: flex; align-items: center; height: 24px; margin-top: 14px; padding-left: 7px; }
.collapse svg { width: 13px; height: 12px; stroke: #56617c; }
.outline { margin-left: 71px; }
.pill { height: 24px; margin-left: 14px; padding: 0 11px; border-radius: 12px; background: #a2a2a2; color: #fff; }
.thumb-row { display: flex; margin-top: 14px; padding-left: 20px; color: #dc6e34; }
.thumb-row span { width: 14px; margin-top: 7px; font-weight: 400; }
.thumb { width: 242px; aspect-ratio: 4 / 3; border: 3px solid #d86f38; border-radius: 5px; background: #fff; box-shadow: inset 0 0 0 2px #dedede; }
.add { align-self: center; margin-top: auto; padding: 0 3px 10px 0; }
.add svg { width: 20px; height: 20px; stroke-width: 2; }
.center { flex: 1; display: flex; flex-direction: column; min-width: 0; }
.stage { flex: 1; display: flex; min-height: 0; }
.canvas { flex: 1; display: flex; justify-content: center; padding: 47px 0 48px; }
.slide { aspect-ratio: 4 / 3; background: #fff; box-shadow: 0 1px 5px 1px rgba(0, 0, 0, .35); }
.scroll { display: flex; flex-direction: column; align-items: center; justify-content: space-between; width: 17px; padding: 11px 0 25px; background: #dedede; }
.scroll svg { width: 10px; height: 5px; fill: #b2b2b2; stroke: none; }
.scroll-end { display: flex; flex-direction: column; align-items: center; gap: 13px; }
.scroll-end svg { width: 8px; height: 5px; }
.scroll-end svg + svg { height: 10px; }
.notes { display: flex; align-items: center; gap: 6px; height: 31px; padding-left: 7px; border-top: 2px solid #dadada; font-size: 16px; }
.notes svg { width: 19px; height: 19px; }
.side { display: flex; flex-direction: column; align-items: center; width: 54px; border-left: 1px solid #d8d8d8; }
.grip { width: 19px; height: 4px; margin: 12px 0 14px; border: solid #b8b8b8; border-width: 1px 0; }
.side button { display: flex; align-items: center; height: 43px; }
.side button svg { width: 20px; height: 20px; }
.side-end { display: flex; justify-content: center; width: 46px; height: 55px; margin-top: auto; padding-top: 29px; border-top: 1px solid #d4d4d4; }
.side-end svg { width: 19px; height: 7px; stroke: #46506a; stroke-width: 2; }

.status { display: flex; align-items: center; height: 39px; padding: 0 17px 0 0; background: #f4f4f4; }
.cell { height: 28px; padding: 4px 12px; border-right: 1px solid #e2e2e2; }
.cell + .cell { padding-right: 11px; }
.beautify { display: flex; align-items: center; gap: 6px; margin-left: auto; }
.beautify svg { width: 18px; height: 18px; }
.beautify .caret { margin-left: 3px; }
.views { display: flex; align-items: center; margin-left: 175px; }
.views svg { width: 19px; height: 18px; }
.note-toggle { display: flex; align-items: center; gap: 2px; margin-right: 6px; }
.view { display: flex; align-items: center; justify-content: center; width: 27px; height: 29px; border-radius: 4px; margin-right: 4px; }
.view.active { background: #c0c0c0; }
.play { display: flex; align-items: center; justify-content: center; width: 38px; height: 29px; margin: 0 5px 0 11px; border-radius: 4px; background: #fc7857; }
.play svg { width: 12px; height: 16px; fill: #fff; stroke: none; }
.percent { margin: 0 4px 0 16px; }
.step { margin-left: 13px; }
.step svg { width: 12px; height: 12px; stroke: #47516b; stroke-width: 2; }
.views input { width: 193px; height: 16px; margin: 0 -9px 0 0; appearance: none; background: linear-gradient(#9a9a9a, #9a9a9a) center / 100% 1px no-repeat; }
.views input::-webkit-slider-thumb { appearance: none; width: 16px; height: 16px; border: 2px solid #555; border-radius: 50%; background: #f6f6f6; }
.fit { margin-left: 15px; }
.fit svg { width: 18px; height: 16px; stroke: #47516b; stroke-width: 1.6; }

.meter { position: absolute; right: 0; border: 2px solid #454853; border-right: 0; border-radius: 5px 0 0 5px; background: #5a5e6d; }
.meter i { display: block; height: 100%; }
.inner { top: 558px; width: 12px; height: 71px; padding: 6px 2px 6px 3px; }
.inner i { background: repeating-linear-gradient(transparent 0 1px, #50545f 1px 2px), linear-gradient(#3b3d45 0 47%, #b9c64b 47%, #52c5a5); }
.outer { top: 762px; width: 15px; height: 89px; padding: 8px 2px 8px 4px; }
.outer i { background: repeating-linear-gradient(transparent 0 2px, #50545f 2px 3px), linear-gradient(#3b3d45 0 22%, #eb9a4c 22%, #dcd04d 42%, #7cc47c 70%, #43d2b8); }

.mark { position: absolute; right: 102px; bottom: 35px; width: 364px; height: 180px; pointer-events: none; overflow: visible; }
.brand { fill: rgba(255, 255, 255, .85); stroke: none; filter: drop-shadow(0 0 1px rgba(0, 0, 0, .35)) drop-shadow(0 0 1px rgba(0, 0, 0, .2)); }
.latin { font: 700 84px "Liberation Sans", sans-serif; }
.du { font: 700 50px "Liberation Sans", sans-serif; fill: #ededed; stroke: #c4c4c4; stroke-width: 1; }
.han { font: 900 60px "Noto Sans CJK SC", sans-serif; }
.url { font: 400 41px "Noto Sans", sans-serif; }
</style>
